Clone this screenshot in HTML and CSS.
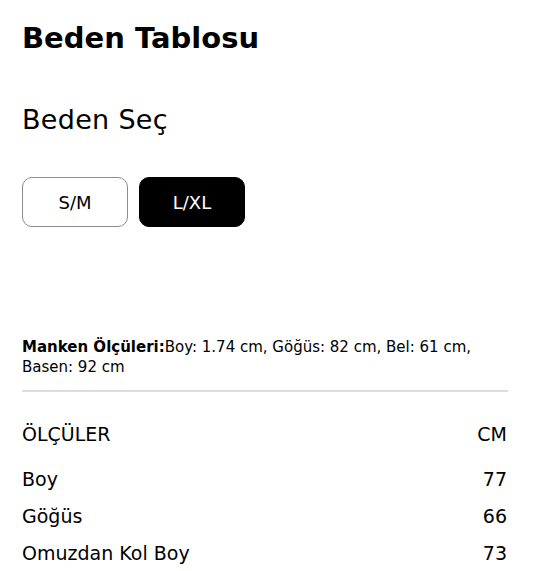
FILE: index.html
```html
<!DOCTYPE html>
<html lang="tr">
<head>
<meta charset="utf-8">
<link rel="stylesheet" href="styles.css">
</head>
<body>
<div class="page">
  <h1 class="title">Beden Tablosu</h1>
  <h2 class="subtitle">Beden Seç</h2>
  <div class="sizes">
    <button class="size">S/M</button>
    <button class="size active">L/XL</button>
  </div>
  <p class="model"><b>Manken Ölçüleri:</b>Boy: 1.74 cm, Göğüs: 82 cm, Bel: 61 cm, Basen: 92 cm</p>
  <div class="divider"></div>
  <div class="table">
    <div class="row head"><span>ÖLÇÜLER</span><span>CM</span></div>
    <div class="row"><span>Boy</span><span>77</span></div>
    <div class="row"><span>Göğüs</span><span>66</span></div>
    <div class="row"><span>Omuzdan Kol Boy</span><span>73</span></div>
  </div>
</div>
</body>
</html>
```
FILE: styles.css
```css
html, body { margin: 0; padding: 0; background: #fff; }
body { font-family: "DejaVu Sans", "Inter", sans-serif; color: #000; }
.page { padding: 20px 40px 0 22px; }
.title { margin: 0; font-size: 29px; font-weight: 700; line-height: 36px; }
.subtitle { margin: 48px 0 0; font-size: 27px; font-weight: 400; line-height: 32px; letter-spacing: 0.3px; }
.sizes { display: flex; gap: 11px; margin-top: 41px; }
.size { width: 106px; height: 50px; border: 1px solid #8c8c8c; border-radius: 10px; background: #fff; color: #000; font-family: inherit; font-size: 18px; padding: 0; }
.size.active { background: #000; color: #fff; border-color: #000; }
.model { margin: 110px 0 0; font-size: 15px; line-height: 20px; padding-right: 30px; }
.model b { font-weight: 700; }
.divider { height: 2px; background: #ddd; margin-top: 13px; margin-right: -1px; }
.table { margin-top: 31px; }
.row { display: flex; justify-content: space-between; font-size: 19px; line-height: 22px; margin-bottom: 15px; }
.row.head { margin-bottom: 23px; }
```
